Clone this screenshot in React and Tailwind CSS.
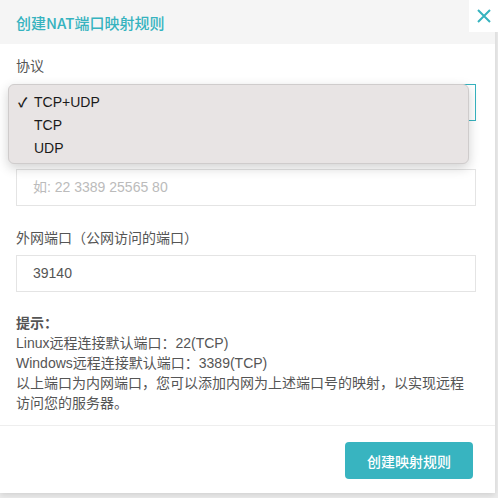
export default function App() {
  const font = { fontFamily: '"Liberation Sans", "Noto Sans CJK SC", sans-serif' };
  const cjk = { fontFamily: '"Noto Sans CJK SC", "Liberation Sans", sans-serif' };
  return (
    <div className="w-[498px] h-[498px] bg-[#ececec] overflow-hidden relative" style={font}>
      <div className="w-[495px] h-[493px] bg-white flex flex-col shadow-[0_2px_6px_rgba(0,0,0,0.12)] relative">
        {/* header */}
        <div className="h-[44px] bg-[#f5f5f5] flex items-center pl-4 shrink-0">
          <span className="text-[15px] font-medium text-[#36b3bf] leading-none" style={cjk}>创建NAT端口映射规则</span>
        </div>
        {/* body */}
        <div className="flex flex-col pl-4 pr-[19px] pt-[12px] text-[14px] text-[#555]">
          <div className="h-5 leading-5">协议</div>
          <div className="mt-2 h-[37px] border border-[#36b3bf] bg-white" />

          <div className="mt-[22px] h-5 leading-5 invisible">内网端口</div>
          <div className="mt-[6px] h-[37px] border border-[#e4e4e4] flex items-center pl-4 text-[#bbb]">如: 22 3389 25565 80</div>

          <div className="mt-[22px] h-5 leading-5">外网端口（公网访问的端口）</div>
          <div className="mt-[7px] h-[37px] border border-[#e4e4e4] flex items-center pl-4 text-[#555]">39140</div>

          <div className="mt-[21px] leading-5 pb-3">
            <div className="font-bold">提示：</div>
            <div>Linux远程连接默认端口：22(TCP)</div>
            <div>Windows远程连接默认端口：3389(TCP)</div>
            <div>以上端口为内网端口，您可以添加内网为上述端口号的映射，以实现远程访问您的服务器。</div>
          </div>
        </div>
        <div className="border-t border-[#eeeeee] flex-1 flex justify-end items-start pt-4 pr-[22px]">
          <button className="w-[128px] h-[37px] rounded-[4px] bg-[#38b4c0] text-white text-[14px] font-medium leading-none" style={cjk}>创建映射规则</button>
        </div>

        {/* dropdown menu overlay */}
        <div className="absolute left-[8px] top-[84px] w-[461px] h-[80px] rounded-[6px] bg-[#e8e4e4] border border-[#cfcccc] shadow-[0_4px_12px_rgba(0,0,0,0.18)] pt-[6px] text-[14px] text-[#1a1a1a]">
          <div className="h-[23px] flex items-center">
            <span className="w-[25px] pl-[9px] text-[13px] font-bold">✓</span>
            <span>TCP+UDP</span>
          </div>
          <div className="h-[23px] flex items-center pl-[25px]">TCP</div>
          <div className="h-[23px] flex items-center pl-[25px]">UDP</div>
        </div>
      </div>
      {/* close button */}
      <div className="absolute right-0 top-0 w-[29px] h-[32px] bg-white flex items-center justify-center">
        <svg width="14" height="14" viewBox="0 0 14 14" fill="none" stroke="#36b3bf" strokeWidth="2">
          <path d="M1 1L13 13M13 1L1 13" />
        </svg>
      </div>
    </div>
  );
}
